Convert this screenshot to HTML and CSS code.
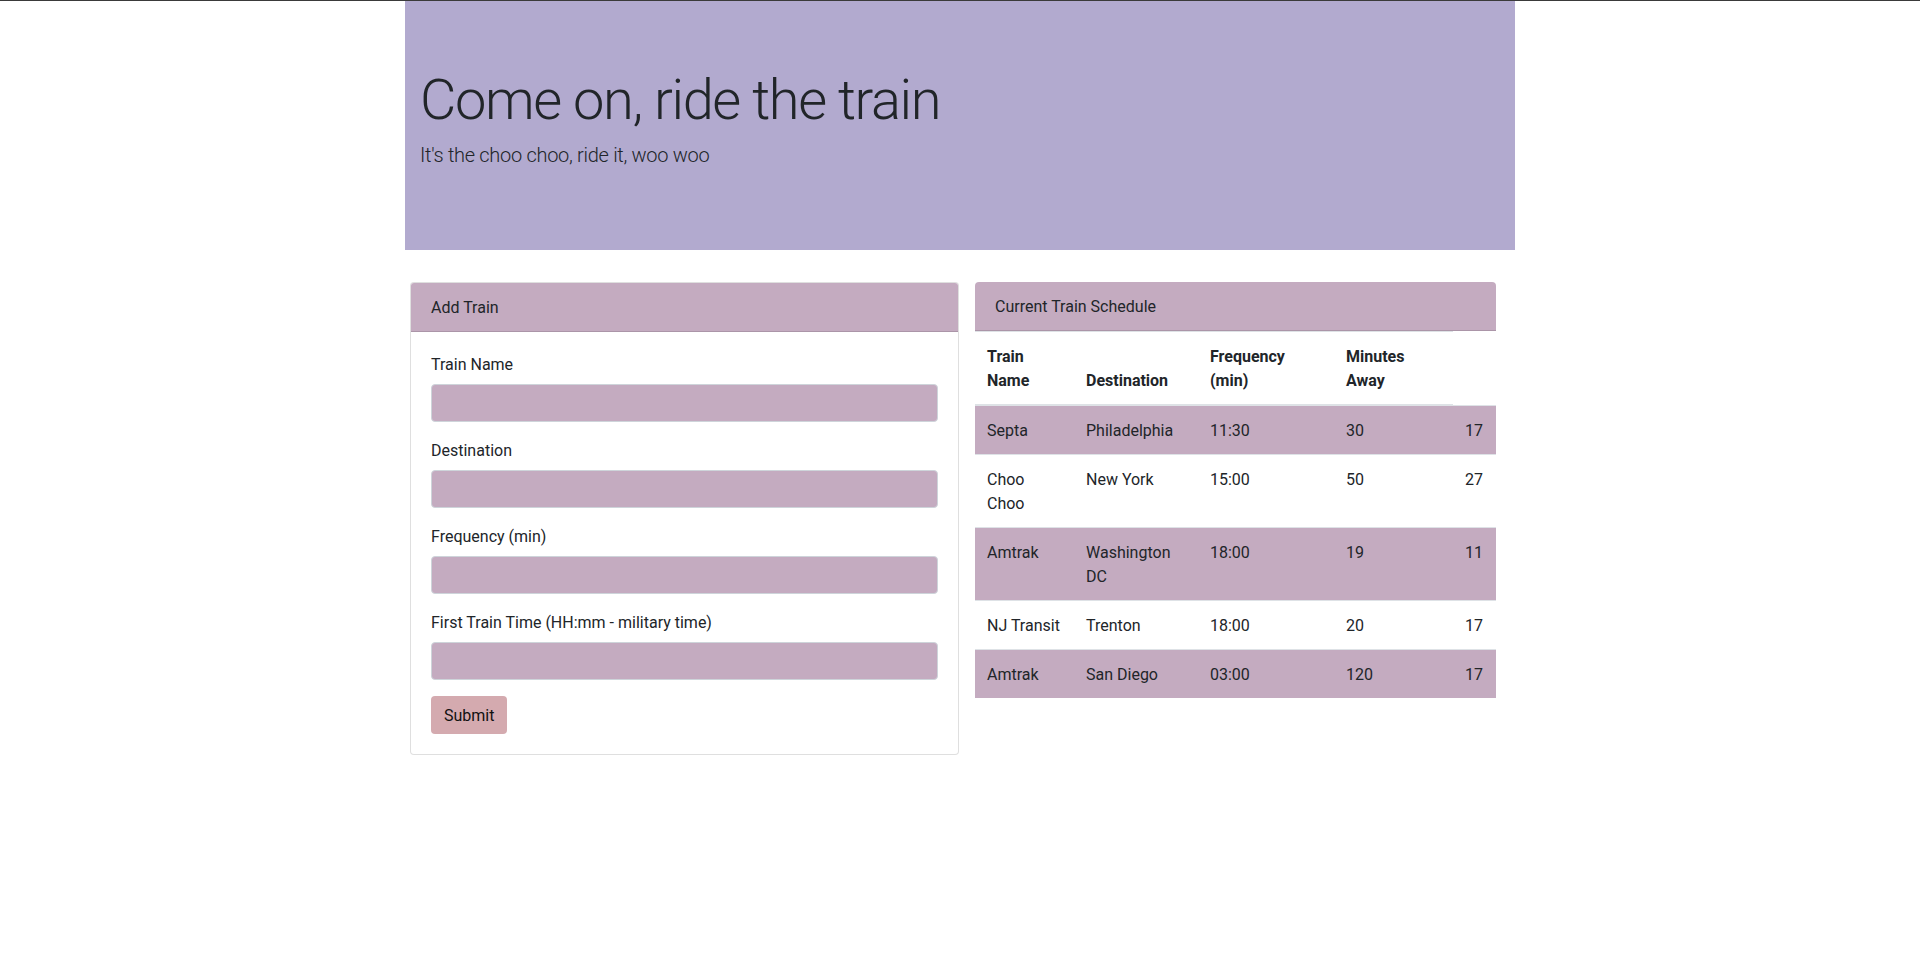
FILE: index.html
```html
<!DOCTYPE html>
<html lang="en">
<head>
<meta charset="utf-8">
<title>Train Scheduler</title>
<link rel="stylesheet" href="styles.css">
</head>
<body>
<div class="page">
  <header class="hero">
    <div class="hero-inner">
      <h1 class="hero-title">Come on, ride the train</h1>
      <p class="hero-lead">It's the choo choo, ride it, woo woo</p>
    </div>
  </header>

  <div class="panels">
    <section class="card add-card">
      <div class="panel-header">Add Train</div>
      <form class="card-body">
        <div class="form-group">
          <label class="form-label" for="train-name">Train Name</label>
          <input class="form-input" id="train-name" type="text">
        </div>
        <div class="form-group">
          <label class="form-label" for="destination">Destination</label>
          <input class="form-input" id="destination" type="text">
        </div>
        <div class="form-group">
          <label class="form-label" for="frequency">Frequency (min)</label>
          <input class="form-input" id="frequency" type="text">
        </div>
        <div class="form-group">
          <label class="form-label" for="first-time">First Train Time (HH:mm - military time)</label>
          <input class="form-input" id="first-time" type="text">
        </div>
        <button class="btn-submit" type="button">Submit</button>
      </form>
    </section>

    <section class="schedule">
      <div class="panel-header schedule-header">Current Train Schedule</div>
      <table class="schedule-table">
        <colgroup>
          <col class="c1"><col class="c2"><col class="c3"><col class="c4"><col class="c5">
        </colgroup>
        <thead>
          <tr>
            <th>Train Name</th>
            <th>Destination</th>
            <th>Frequency (min)</th>
            <th>Minutes Away</th>
          </tr>
        </thead>
        <tbody>
          <tr><td>Septa</td><td>Philadelphia</td><td>11:30</td><td>30</td><td>17</td></tr>
          <tr><td>Choo Choo</td><td>New York</td><td>15:00</td><td>50</td><td>27</td></tr>
          <tr><td>Amtrak</td><td>Washington DC</td><td>18:00</td><td>19</td><td>11</td></tr>
          <tr><td>NJ Transit</td><td>Trenton</td><td>18:00</td><td>20</td><td>17</td></tr>
          <tr><td>Amtrak</td><td>San Diego</td><td>03:00</td><td>120</td><td>17</td></tr>
        </tbody>
      </table>
    </section>
  </div>
</div>
</body>
</html>
```

FILE: styles.css
```css
* { box-sizing: border-box; }

html, body {
  margin: 0;
  padding: 0;
  background: #ffffff;
}

body {
  border-top: 1px solid #3a3a3a;
  font-family: Roboto, "Liberation Sans", sans-serif;
  font-size: 16px;
  line-height: 1.5;
  color: #212529;
}

.page {
  width: 1110px;
  margin: 0 auto;
}

.hero {
  background: #b2aacf;
  padding: 64px 0;
  margin-bottom: 32px;
}

.hero-inner {
  padding: 0 15px;
}

.hero-title {
  margin: 0 0 8px;
  font-size: 56px;
  font-weight: 300;
  line-height: 1.2;
  letter-spacing: -1.4px;
  padding-top: 2px;
}

.hero-lead {
  margin: -2px 0 16px;
  font-size: 20px;
  font-weight: 300;
  line-height: 1.5;
  letter-spacing: -0.3px;
}

.panels {
  display: grid;
  grid-template-columns: 549px 521px;
  column-gap: 16px;
  padding-left: 5px;
  align-items: start;
}

.card {
  border: 1px solid rgba(0, 0, 0, 0.125);
  border-radius: 4px;
  overflow: hidden;
  background: #fff;
}

.panel-header {
  background: #c4abc0;
  padding: 13px 20px 11px;
  border-bottom: 1px solid rgba(0, 0, 0, 0.125);
}

.card-body {
  padding: 20px;
  margin: 0;
}

.form-group {
  margin-bottom: 16px;
}

.form-label {
  display: inline-block;
  padding-top: 1px;
  margin-bottom: 7px;
}

.form-input {
  display: block;
  width: 100%;
  height: 38px;
  padding: 6px 12px;
  font: inherit;
  color: #495057;
  background: #c4abc0;
  border: 1px solid #ced4da;
  border-radius: 4px;
}

.btn-submit {
  display: inline-block;
  font: inherit;
  line-height: 1.5;
  padding: 7px 12px 5px;
  color: #111;
  background: #d4aaaf;
  border: 1px solid transparent;
  border-radius: 4px;
}

.schedule-header {
  border-radius: 4px 4px 0 0;
}

.schedule-table {
  width: 521px;
  border-collapse: collapse;
  table-layout: fixed;
}

.c1 { width: 99px; }
.c2 { width: 124px; }
.c3 { width: 136px; }
.c4 { width: 119px; }
.c5 { width: 43px; }

.schedule-table th,
.schedule-table td {
  padding: 13px 12px 11px;
  text-align: left;
  vertical-align: top;
  border-top: 1px solid #dee2e6;
}

.schedule-table thead th {
  vertical-align: bottom;
  border-bottom: 2px solid #dee2e6;
  font-weight: 700;
}

.schedule-table tbody tr:nth-child(odd) {
  background: #c4abc0;
}
```
